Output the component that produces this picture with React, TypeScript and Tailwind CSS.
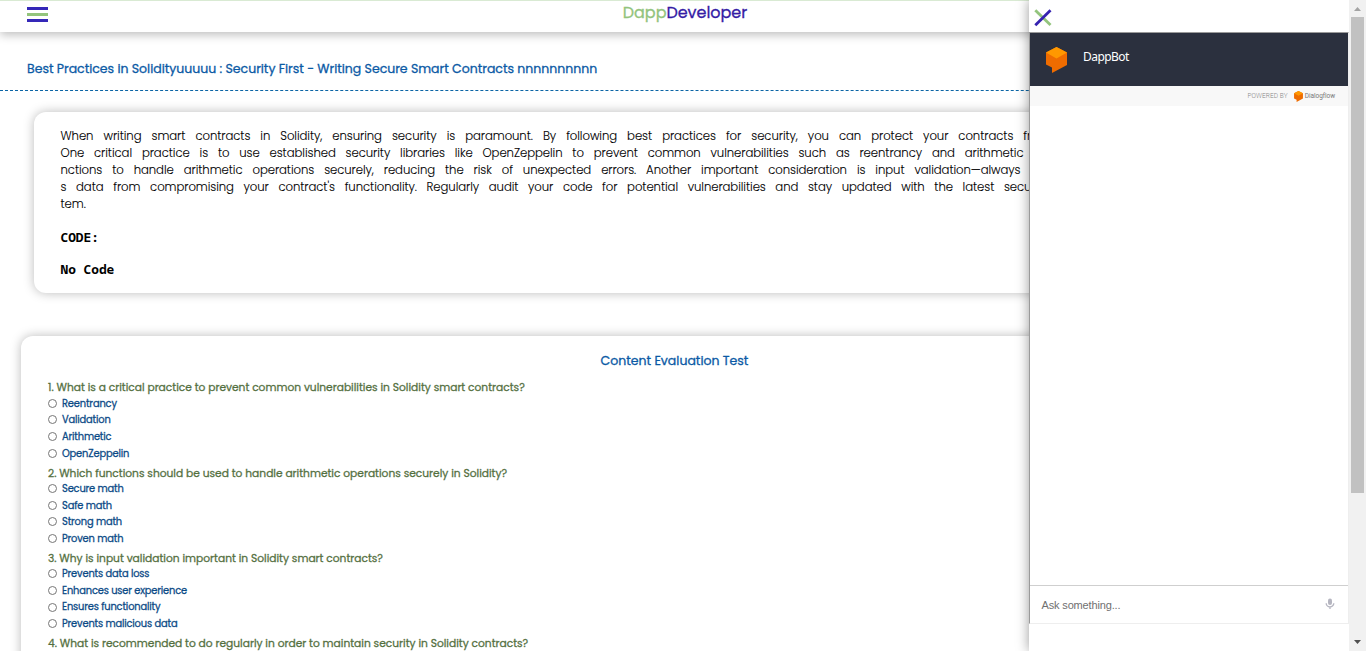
import React from "react";

const paragraph = [
  { text: "When writing smart contracts in Solidity, ensuring security is paramount. By following best practices for security, you can protect your contracts from", cls: "w-[990px]" },
  { text: "One critical practice is to use established security libraries like OpenZeppelin to prevent common vulnerabilities such as reentrancy and arithmetic", cls: "w-[963px]" },
  { text: "nctions to handle arithmetic operations securely, reducing the risk of unexpected errors. Another important consideration is input validation—always", cls: "w-[960px]" },
  { text: "s data from compromising your contract's functionality. Regularly audit your code for potential vulnerabilities and stay updated with the latest security", cls: "w-[988px]" },
];

const questions = [
  {
    text: "1. What is a critical practice to prevent common vulnerabilities in Solidity smart contracts?",
    options: ["Reentrancy", "Validation", "Arithmetic", "OpenZeppelin"],
  },
  {
    text: "2. Which functions should be used to handle arithmetic operations securely in Solidity?",
    options: ["Secure math", "Safe math", "Strong math", "Proven math"],
  },
  {
    text: "3. Why is input validation important in Solidity smart contracts?",
    options: ["Prevents data loss", "Enhances user experience", "Ensures functionality", "Prevents malicious data"],
  },
  {
    text: "4. What is recommended to do regularly in order to maintain security in Solidity contracts?",
    options: [],
  },
];

function Cube({ className }: { className: string }) {
  return (
    <svg viewBox="0 0 21 26" className={className}>
      <path d="M0 5.5 10.5 0 21 5.5V18L6 26V20.500L0 17.500Z" fill="#ef6c00" />
      <path d="M0 5.500 10.500 0 21 5.500 10.500 11.500Z" fill="#ff9800" />
    </svg>
  );
}

function ChatPanel() {
  return (
    <aside className="absolute top-0 right-0 flex h-full w-[320px] flex-col bg-white shadow-[0_0_12px_rgba(0,0,0,0.4)]">
      <div className="h-8 shrink-0 pt-[9px] pl-[5px]">
        <svg width="18" height="18" viewBox="0 0 18 18" fill="none" strokeWidth="2.8">
          <path d="M1.300 1.300 16.500 16" stroke="#93c47d" />
          <path d="M1.300 16.300 16.500 1.300" stroke="#3522b0" />
        </svg>
      </div>
      <div className="flex h-[592px] shrink-0 flex-col border border-t-[#9a9a9a] border-r-[#eeeeee] border-b-[#eeeeee] border-l-[#9a9a9a]">
        <div className="flex h-[53px] shrink-0 items-center bg-[#2b303e] pl-4">
          <Cube className="h-[26px] w-[21px]" />
          <span className="mb-[5px] ml-[16px] font-['Noto_Sans'] text-[12px] tracking-[-0.55px] text-white">DappBot</span>
        </div>
        <div className="flex h-5 shrink-0 items-center justify-end bg-[#f8f8f8] pr-[13px]">
          <span className="pt-px font-['Roboto'] text-[6.5px] font-light tracking-[0.1px] text-[#858585]">POWERED BY</span>
          <Cube className="ml-[6px] h-[11px] w-[9px]" />
          <span className="ml-[2px] pt-px font-['Roboto'] text-[6.500px] tracking-[-0.05px] text-[#777777]">Dialogflow</span>
        </div>
        <div className="flex-1" />
        <div className="flex h-[38px] shrink-0 items-center justify-between border-t border-[#cfcfcf] pr-[13px] pl-[11.500px]">
          <span className="pt-[2px] font-['Liberation_Sans'] text-[11px] tracking-[-0.15px] text-[#707070]">Ask something...</span>
          <svg width="10" height="12" viewBox="0 0 10 12" className="mb-px" fill="none">
            <rect x="3" y="0.500" width="4" height="6.500" rx="2" fill="#b5b5c0" />
            <path d="M1.200 5.200a3.800 3.600 0 0 0 7.600 0M5 8.800V11" stroke="#b5b5c0" strokeWidth="1.300" />
          </svg>
        </div>
      </div>
    </aside>
  );
}

function Scrollbar() {
  return (
    <div className="flex w-[17px] shrink-0 flex-col items-center bg-[#f1f1f1]">
      <svg width="17" height="17" viewBox="0 0 17 17"><path d="M5 11 8.500 7 12 11Z" fill="#a3a3a3" /></svg>
      <div className="h-[476px] w-[13px] bg-[#c1c1c1]" />
      <div className="flex-1" />
      <svg width="17" height="17" viewBox="0 0 17 17"><path d="M5 6 8.500 10 12 6Z" fill="#505050" /></svg>
    </div>
  );
}

export default function App() {
  return (
    <div className="flex h-[651px] w-[1366px] overflow-hidden bg-white font-['Poppins','Inter',sans-serif]">
      <div className="relative h-full w-[1349px] overflow-hidden">
        <header className="grid h-8 grid-cols-[1fr_auto_1fr] border-t border-[#d9ead3] pl-[27px] shadow-[0_3px_10px_rgba(0,0,0,0.25)]">
          <div className="flex w-[21px] flex-col gap-[3px] pt-[6px]">
            <div className="h-[3px] bg-[#3528b8]" />
            <div className="h-[3px] bg-[#93c47d]" />
            <div className="h-[3px] bg-[#3528b8]" />
          </div>
          <div className="mr-[6px] text-[16px] leading-6 tracking-[-0.03px] [-webkit-text-stroke:0.3px]">
            <span className="text-[#93c47d]">Dapp</span>
            <span className="text-[#351ca5]">Developer</span>
          </div>
        </header>
        <div className="flex h-[59px] items-center border-b border-dashed border-[#0b65a5] pt-[17px] pl-[27px]">
          <h1 className="text-[12.500px] tracking-[-0.012px] whitespace-nowrap text-[#0b5aa5] [-webkit-text-stroke:0.3px]">
            Best Practices in Solidityuuuuu : Security First - Writing Secure Smart Contracts nnnnnnnnnn
          </h1>
        </div>
        <section className="mt-[21px] ml-[34px] h-[181px] w-[1281px] rounded-[12px] pt-4 pl-[26.500px] shadow-[0_0_11px_rgba(0,0,0,0.27)]">
          <div className="text-[11.700px] leading-[17px] font-light tracking-[-0.08px] text-black [-webkit-text-stroke:0.1px]">
            {paragraph.map((line) => (
              <p key={line.text} className={`${line.cls} whitespace-nowrap [text-align-last:justify]`}>{line.text}</p>
            ))}
            <p>tem.</p>
          </div>
          <div className="pt-4 font-['Noto_Sans_Mono','DejaVu_Sans_Mono',monospace] text-[12.800px] leading-4 font-bold text-black">
            <p>CODE:</p>
            <p className="mt-4">No Code</p>
          </div>
        </section>
        <section className="mt-[43px] ml-[21px] h-[400px] w-[1307px] rounded-[12px] pt-4 pl-[27px] shadow-[0_0_11px_rgba(0,0,0,0.27)]">
          <h2 className="mr-[27px] h-[24.300px] text-center text-[12.500px] leading-[18px] text-[#0b5aa5] [-webkit-text-stroke:0.3px]">Content Evaluation Test</h2>
          {questions.map((q) => (
            <div key={q.text}>
              <p className="h-[18.700px] pt-1 text-[10.670px] leading-[15px] whitespace-nowrap text-[#54703f] [-webkit-text-stroke:0.28px]">{q.text}</p>
              {q.options.map((o) => (
                <div key={o} className="flex h-[16.650px] items-center text-[9.900px] tracking-[-0.16px] text-[#0b4a86] [-webkit-text-stroke:0.28px]">
                  <span className="mr-[5px] h-[9px] w-[9px] rounded-full border border-[#767676]" />
                  <span className="pt-[1.500px]">{o}</span>
                </div>
              ))}
            </div>
          ))}
        </section>
        <ChatPanel />
      </div>
      <Scrollbar />
    </div>
  );
}
